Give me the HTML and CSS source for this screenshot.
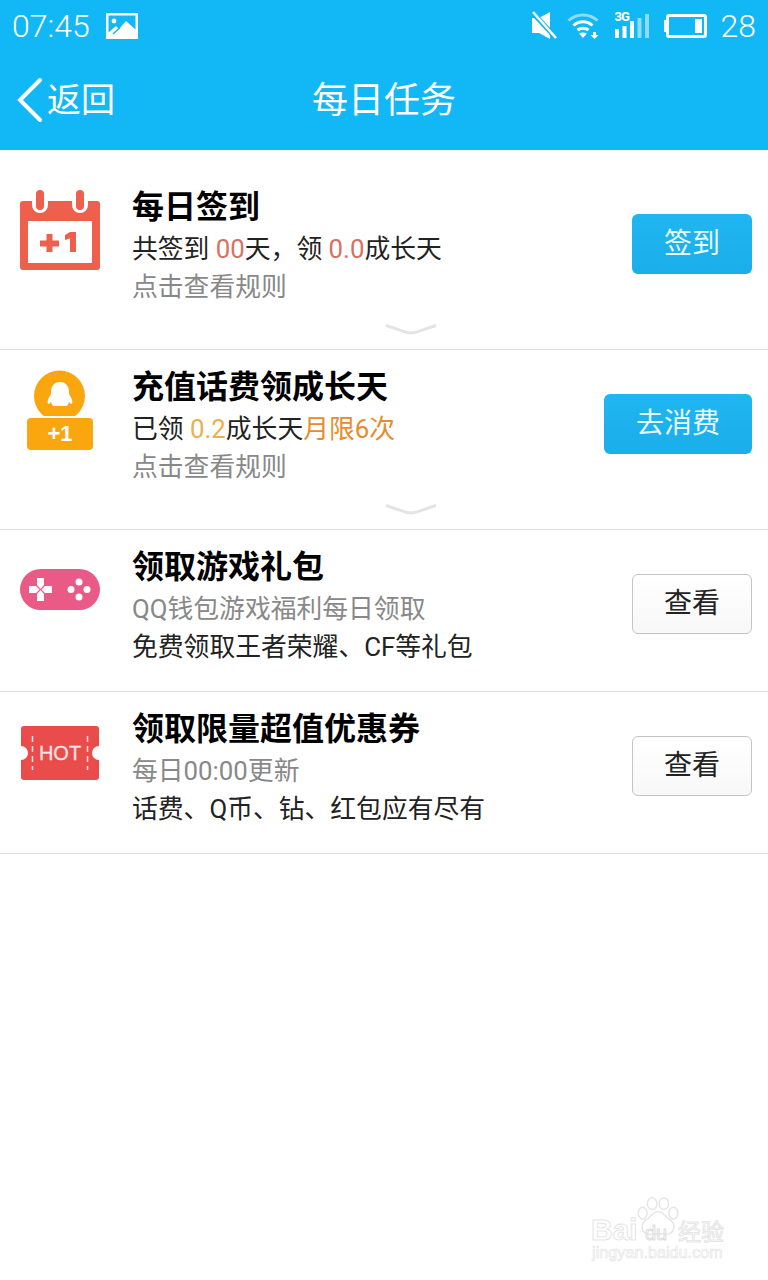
FILE: index.html
```html
<!DOCTYPE html>
<html lang="zh-CN">
<head>
    <meta charset="UTF-8">
    <meta name="viewport" content="width=device-width, initial-scale=1.0">
    <title>每日任务</title>
    <link rel="stylesheet" href="styles.css">
</head>
<body>
    <header class="top">
        <div class="status">
            <span class="clock">07:45</span>
            <svg class="ic-picture" width="32" height="26" viewBox="0 0 32 26">
                <path fill="#fff" fill-rule="evenodd" d="M0 0h32v26H0zM2.500 2.500v17L10 13l3 3 7-8 9.500 8.500v-14z"/>
                <circle cx="8" cy="8" r="2.400" fill="#fff"/>
                <path stroke="#12b7f5" stroke-width="1.500" d="M7 21l7-6.500"/>
            </svg>
            <span class="status-right">
                <svg width="25" height="30" viewBox="0 0 25 30">
                    <path fill="#fff" d="M0 7h7l11-6v27L7 22H0z"/>
                    <path stroke="#12b7f5" stroke-width="5" d="M-1 0l27 29"/>
                    <path stroke="#fff" stroke-width="2.500" d="M1 1l23 26"/>
                </svg>
                <svg class="ic-wifi" width="33" height="28" viewBox="0 0 33 28">
                    <path fill="none" stroke="#8fdcfa" stroke-width="3" d="M1.500 8.500c8-7.500 21-7.500 29 0"/>
                    <path fill="none" stroke="#fff" stroke-width="3" d="M6.500 13.500c5.500-5 13.500-5 19 0"/>
                    <path fill="none" stroke="#fff" stroke-width="3" d="M10.500 18c3-2.500 8-2.500 11 0"/>
                    <path fill="#fff" d="M12 21.500c2.500-1.500 5.500-1.500 8 0l-4 4.500zM26 20h3v3h2.500l-4 4-4-4H26z"/>
                </svg>
                <span class="signal">
                    <span class="net">3G</span>
                    <svg width="34" height="26" viewBox="0 0 34 26">
                        <path fill="#fff" d="M0 16h4v9H0zM7.500 13h4v12h-4zM15 8h4v17h-4z"/>
                        <path fill="#8fdcfa" d="M22.500 5h4v20h-4zM30 1h4v24h-4z"/>
                    </svg>
                </span>
                <svg class="ic-battery" width="43" height="24" viewBox="0 0 43 24">
                    <path fill="#fff" d="M0 6h3v12H0z"/>
                    <rect x="3.500" y="1.500" width="38" height="21" rx="1.500" fill="none" stroke="#fff" stroke-width="3"/>
                    <path fill="#fff" d="M31 5h7v14h-7z"/>
                </svg>
                <span class="clock">28</span>
            </span>
        </div>
        <nav class="bar">
            <a class="back">
                <svg width="26" height="46" viewBox="0 0 26 46">
                    <path fill="none" stroke="#fff" stroke-width="4" stroke-linecap="round" d="M23 3L3 23l20 20"/>
                </svg>
                返回
            </a>
            <h1 class="bar-title">每日任务</h1>
        </nav>
    </header>

    <main>
        <section class="task task-first">
            <div class="task-main">
                <svg class="icon" width="80" height="80" viewBox="0 0 80 80">
                    <path fill="#ee5f4d" d="M3 11h74a3 3 0 0 1 3 3v63a3 3 0 0 1-3 3H3a3 3 0 0 1-3-3V14a3 3 0 0 1 3-3z"/>
                    <rect x="8" y="31" width="64" height="42" fill="#fff"/>
                    <rect x="12" y="4" width="16" height="19" rx="8" fill="#fff"/>
                    <rect x="52" y="4" width="16" height="19" rx="8" fill="#fff"/>
                    <rect x="16" y="0" width="8" height="20" rx="4" fill="#ee5f4d"/>
                    <rect x="56" y="0" width="8" height="20" rx="4" fill="#ee5f4d"/>
                    <path fill="#ee5f4d" d="M26.500 44h6v6.500H39v6h-6.500V62h-6v-5.500H20v-6h6.500zM50 42h6v20h-6V48.500l-5 1.500v-5z"/>
                </svg>
                <div class="text">
                    <h2 class="title">每日签到</h2>
                    <p class="line">共签到 <span class="red">00</span>天，领 <span class="red">0.0</span>成长天</p>
                    <p class="line grey">点击查看规则</p>
                </div>
                <a class="btn btn-blue">签到</a>
            </div>
            <svg class="fold" width="52" height="12" viewBox="0 0 52 12">
                <path fill="none" stroke="#e4e4e4" stroke-width="3" d="M1 2.500C16 7 20 10 26 10s10-3 25-7.500"/>
            </svg>
        </section>

        <section class="task">
            <div class="task-main">
                <svg class="icon" width="80" height="80" viewBox="0 0 80 80">
                    <circle cx="39.500" cy="26" r="25.500" fill="#f9a60f"/>
                    <path fill="#fff" d="M40 12c6 0 9 4.500 9 10 0 2 .5 3 1.500 4.500 1.500 2.500 2.500 5.500 1.500 7-1 1-2-.5-3-1.500-.5 2-1 3-2.500 4h-13c-1.500-1-2-2-2.500-4-1 1-2 2.500-3 1.500-1-1.500 0-4.500 1.500-7 1-1.500 1.500-2.500 1.500-4.500 0-5.500 3-10 9-10z"/>
                    <path fill="#fff" d="M6 46h68v2H6z"/>
                    <rect x="7" y="48" width="66" height="32" rx="4" fill="#f9a60f"/>
                    <text class="plus-one" x="40" y="71" text-anchor="middle">+1</text>
                </svg>
                <div class="text">
                    <h2 class="title">充值话费领成长天</h2>
                    <p class="line">已领 <span class="yellow">0.2</span>成长天<span class="orange">月限6次</span></p>
                    <p class="line grey">点击查看规则</p>
                </div>
                <a class="btn btn-blue btn-wide">去消费</a>
            </div>
            <svg class="fold" width="52" height="12" viewBox="0 0 52 12">
                <path fill="none" stroke="#e4e4e4" stroke-width="3" d="M1 2.500C16 7 20 10 26 10s10-3 25-7.500"/>
            </svg>
        </section>

        <section class="task">
            <div class="task-main">
                <svg class="icon" width="80" height="80" viewBox="0 0 80 80">
                    <rect x="0" y="19" width="80" height="41" rx="20.500" fill="#ea5a87"/>
                    <path fill="#fff" d="M17 28h7v7l-3.500 4-3.500-4zM17 51h7v-7l-3.500-4-3.500 4zM9 36h7l3.500 3.500-3.500 3.500H9zM32 36h-7l-3.500 3.500 3.500 3.500h7z"/>
                    <circle cx="59" cy="32" r="3.500" fill="#fff"/>
                    <circle cx="59" cy="47" r="3.500" fill="#fff"/>
                    <circle cx="51" cy="39.500" r="3.500" fill="#fff"/>
                    <circle cx="67" cy="39.500" r="3.500" fill="#fff"/>
                </svg>
                <div class="text">
                    <h2 class="title">领取游戏礼包</h2>
                    <p class="line grey">QQ钱包游戏福利每日领取</p>
                    <p class="line">免费领取王者荣耀、CF等礼包</p>
                </div>
                <a class="btn">查看</a>
            </div>
        </section>

        <section class="task">
            <div class="task-main">
                <svg class="icon" width="80" height="80" viewBox="0 0 80 80">
                    <path fill="#ea4c4c" d="M4 14h72a3 3 0 0 1 3 3v17a7 7 0 0 0 0 14v17a3 3 0 0 1-3 3H4a3 3 0 0 1-3-3V48a7 7 0 0 0 0-14V17a3 3 0 0 1 3-3z"/>
                    <path fill="none" stroke="#fbdcdc" stroke-width="1.500" stroke-dasharray="6 4" d="M12.500 24v34M67.500 24v34"/>
                    <text class="hot" x="40" y="48" text-anchor="middle">HOT</text>
                </svg>
                <div class="text">
                    <h2 class="title">领取限量超值优惠券</h2>
                    <p class="line grey">每日00:00更新</p>
                    <p class="line">话费、Q币、钻、红包应有尽有</p>
                </div>
                <a class="btn">查看</a>
            </div>
        </section>
    </main>

    <div class="mark">
        <svg class="paw" width="44" height="44" viewBox="0 0 60 60">
            <g fill="#fff" stroke="#e6e6e6" stroke-width="2">
                <ellipse cx="9" cy="22" rx="6" ry="8"/>
                <ellipse cx="22" cy="9" rx="6.500" ry="8"/>
                <ellipse cx="38" cy="9" rx="6.500" ry="8"/>
                <ellipse cx="51" cy="22" rx="6" ry="8"/>
                <path d="M30 20c8 0 10 7 16 11 8 5 8 18-4 20-4 .5-8-1-12-1s-8 1.500-12 1c-12-2-12-15-4-20 6-4 8-11 16-11z"/>
            </g>
        </svg>
        <span class="mark-bai">Bai</span>
        <span class="mark-du">du</span>
        <span class="mark-cn">经验</span>
        <span class="mark-url">jingyan.baidu.com</span>
    </div>
</body>
</html>
```

FILE: styles.css
```css
* {
    box-sizing: border-box;
}

html, body {
    margin: 0;
    padding: 0;
}

body {
    width: 768px;
    height: 1280px;
    overflow: hidden;
    position: relative;
    background-color: #fff;
    color: #111;
    font-family: Roboto, "Noto Sans CJK SC", sans-serif;
}

.top {
    height: 150px;
    background-color: #12b7f5;
    color: #fff;
}

.status {
    height: 50px;
    display: flex;
    align-items: center;
    padding: 2px 12px 0 12px;
}

.clock {
    font-size: 32px;
    font-weight: 300;
    line-height: 48px;
}

.ic-picture {
    margin-left: 16px;
}

.status-right {
    margin-left: auto;
    display: flex;
    align-items: center;
}

.ic-wifi {
    margin-left: 10px;
}

.signal {
    position: relative;
    margin-left: 15px;
    display: flex;
}

.net {
    position: absolute;
    left: 0;
    top: -2px;
    font-size: 13px;
    font-weight: 700;
    line-height: 12px;
    letter-spacing: -1px;
}

.ic-battery {
    margin-left: 15px;
}

.status-right .clock {
    margin-left: 14px;
}

.bar {
    height: 100px;
    display: grid;
    grid-template-columns: 1fr auto 1fr;
    align-items: center;
    padding: 0 17px;
}

.back {
    display: flex;
    align-items: center;
    gap: 4px;
    font-size: 34px;
    line-height: 46px;
}

.bar-title {
    margin: 2px 0 0 0;
    font-size: 36px;
    font-weight: 400;
    line-height: 50px;
}

.task {
    display: flex;
    flex-direction: column;
    padding-top: 16px;
    height: 180px;
    border-bottom: 1px solid #ddd;
}

.task-first {
    padding-top: 36px;
    height: 200px;
}

.task:nth-child(n+3) {
    height: 162px;
}

.task-main {
    display: flex;
    align-items: flex-start;
    padding: 0 16px 0 20px;
}

.icon {
    flex: none;
    margin-top: 4px;
    overflow: visible;
}

.text {
    margin-left: 32px;
    padding-top: 1px;
}

.title {
    margin: 0 0 3px 0;
    font-size: 32px;
    font-weight: 700;
    line-height: 40px;
    color: #000;
}

.line {
    margin: 0;
    font-size: 25.800px;
    line-height: 38px;
    color: #222;
    white-space: nowrap;
}

.grey {
    color: #888;
}

.red {
    color: #d9705f;
}

.yellow {
    color: #e8b04f;
}

.orange {
    color: #e98b2a;
}

.btn {
    flex: none;
    width: 120px;
    height: 60px;
    margin-top: 28px;
    margin-left: auto;
    padding-bottom: 6px;
    display: flex;
    align-items: center;
    justify-content: center;
    font-size: 28px;
    color: #222;
    background: linear-gradient(#fff, #f8f8f8);
    border: 1px solid #c4c4c4;
    border-radius: 6px;
}

.btn-blue {
    color: #e8f9ff;
    background: linear-gradient(#1fb6f2, #1aaeea);
    border: none;
}

.btn-wide {
    width: 148px;
}

.fold {
    display: block;
    margin: 17px auto 0 auto;
    position: relative;
    left: 27px;
}

.plus-one {
    font-family: "Liberation Sans", sans-serif;
    font-size: 22px;
    font-weight: 700;
    fill: #fff;
}

.hot {
    font-family: "Liberation Sans", sans-serif;
    font-size: 20px;
    fill: #fbe4e4;
    stroke: #fbe4e4;
    stroke-width: 0.3px;
}

/* watermark over the empty area */
.mark {
    position: absolute;
    left: 588px;
    top: 1196px;
    width: 140px;
    height: 70px;
    color: transparent;
    -webkit-text-stroke: 1px #e6e6e6;
    font-family: "Liberation Sans", sans-serif;
}

.paw {
    position: absolute;
    left: 48px;
    top: 1px;
}

.mark-bai {
    position: absolute;
    left: 3px;
    top: 15px;
    font-size: 30px;
    font-weight: 700;
    line-height: 38px;
}

.mark-du {
    position: absolute;
    left: 57px;
    top: 25px;
    font-size: 20px;
    line-height: 24px;
    -webkit-text-stroke-color: #dedede;
}

.mark-cn {
    position: absolute;
    left: 90px;
    top: 19px;
    font-family: "Noto Sans CJK SC", sans-serif;
    font-size: 23px;
    line-height: 30px;
}

.mark-url {
    position: absolute;
    left: 4px;
    top: 47px;
    font-size: 16px;
    line-height: 20px;
    letter-spacing: 0.100px;
    -webkit-text-stroke-width: 0.700px;
}
```
